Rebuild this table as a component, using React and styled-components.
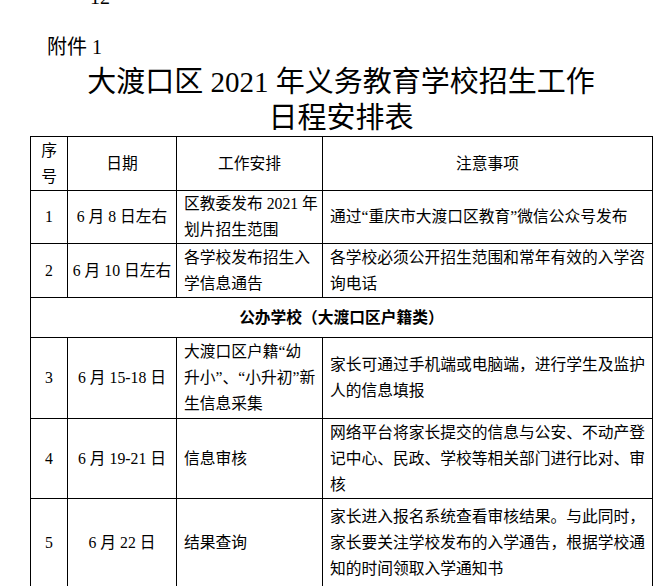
import React from 'react';
import styled, { createGlobalStyle } from 'styled-components';

const GlobalStyle = createGlobalStyle`
  html, body {
    margin: 0;
    background: #fff;
  }
  body {
    font-family: "Liberation Serif", "Noto Sans CJK SC", serif;
    color: #000;
    overflow: hidden;
  }
`;

const Page = styled.div`
  width: 622px;
  padding: 0 19px 0 30px;
`;

const PageNumber = styled.div`
  font-size: 20px;
  line-height: 20px;
  margin-top: -13px;
  padding-left: 60px;
`;

const Attachment = styled.div`
  font-size: 20px;
  line-height: 24px;
  margin-top: 28px;
  padding-left: 17px;
`;

const Title = styled.h1`
  margin: 5px 0 0;
  font-size: 29px;
  line-height: 36px;
  font-weight: normal;
  text-align: center;
`;

const Schedule = styled.table`
  width: 622px;
  border-collapse: collapse;
  table-layout: fixed;
  font-size: 15.75px;
  line-height: 26px;
`;

const Col = styled.col`
  width: ${({ $w }) => $w}px;
`;

const Row = styled.tr`
  height: ${({ $h }) => $h}px;
`;

const Cell = styled.td`
  border: 1px solid #000;
  padding: 0 ${({ $align }) => ($align === 'left' ? '2px 0 7px' : '2px')};
  text-align: ${({ $align }) => $align || 'center'};
  vertical-align: middle;
  white-space: nowrap;
  overflow: hidden;
`;

const SectionCell = styled(Cell)`
  font-weight: bold;
`;

const Lines = ({ items }) => items.map((t, i) => (
  <React.Fragment key={i}>
    {i > 0 && <br />}
    {t}
  </React.Fragment>
));

const before = [
  {
    no: '1',
    date: '6 月 8 日左右',
    task: ['区教委发布 2021 年', '划片招生范围'],
    note: ['通过“重庆市大渡口区教育”微信公众号发布'],
    h: 53,
  },
  {
    no: '2',
    date: '6 月 10 日左右',
    task: ['各学校发布招生入', '学信息通告'],
    note: ['各学校必须公开招生范围和常年有效的入学咨', '询电话'],
    h: 54,
  },
];

const after = [
  {
    no: '3',
    date: '6 月 15-18 日',
    task: ['大渡口区户籍“幼', '升小”、“小升初”新', '生信息采集'],
    note: ['家长可通过手机端或电脑端，进行学生及监护', '人的信息填报'],
    h: 81,
  },
  {
    no: '4',
    date: '6 月 19-21 日',
    task: ['信息审核'],
    note: ['网络平台将家长提交的信息与公安、不动产登', '记中心、民政、学校等相关部门进行比对、审', '核'],
    h: 80,
  },
  {
    no: '5',
    date: '6 月 22 日',
    task: ['结果查询'],
    note: ['家长进入报名系统查看审核结果。与此同时，', '家长要关注学校发布的入学通告，根据学校通', '知的时间领取入学通知书'],
    h: 89,
  },
];

function ScheduleRow({ item }) {
  return (
    <Row $h={item.h}>
      <Cell>{item.no}</Cell>
      <Cell>{item.date}</Cell>
      <Cell $align="left"><Lines items={item.task} /></Cell>
      <Cell $align="left"><Lines items={item.note} /></Cell>
    </Row>
  );
}

export default function App() {
  return (
    <>
      <GlobalStyle />
      <Page>
        <PageNumber>12</PageNumber>
        <Attachment>附件 1</Attachment>
        <Title>
          大渡口区 2021 年义务教育学校招生工作
          <br />
          日程安排表
        </Title>
        <Schedule>
          <colgroup>
            <Col $w={37} />
            <Col $w={109} />
            <Col $w={146} />
            <Col $w={330} />
          </colgroup>
          <tbody>
            <Row $h={54}>
              <Cell>序<br />号</Cell>
              <Cell>日期</Cell>
              <Cell>工作安排</Cell>
              <Cell>注意事项</Cell>
            </Row>
            {before.map((item) => <ScheduleRow key={item.no} item={item} />)}
            <Row $h={40}>
              <SectionCell colSpan={4}>公办学校（大渡口区户籍类）</SectionCell>
            </Row>
            {after.map((item) => <ScheduleRow key={item.no} item={item} />)}
          </tbody>
        </Schedule>
      </Page>
    </>
  );
}
